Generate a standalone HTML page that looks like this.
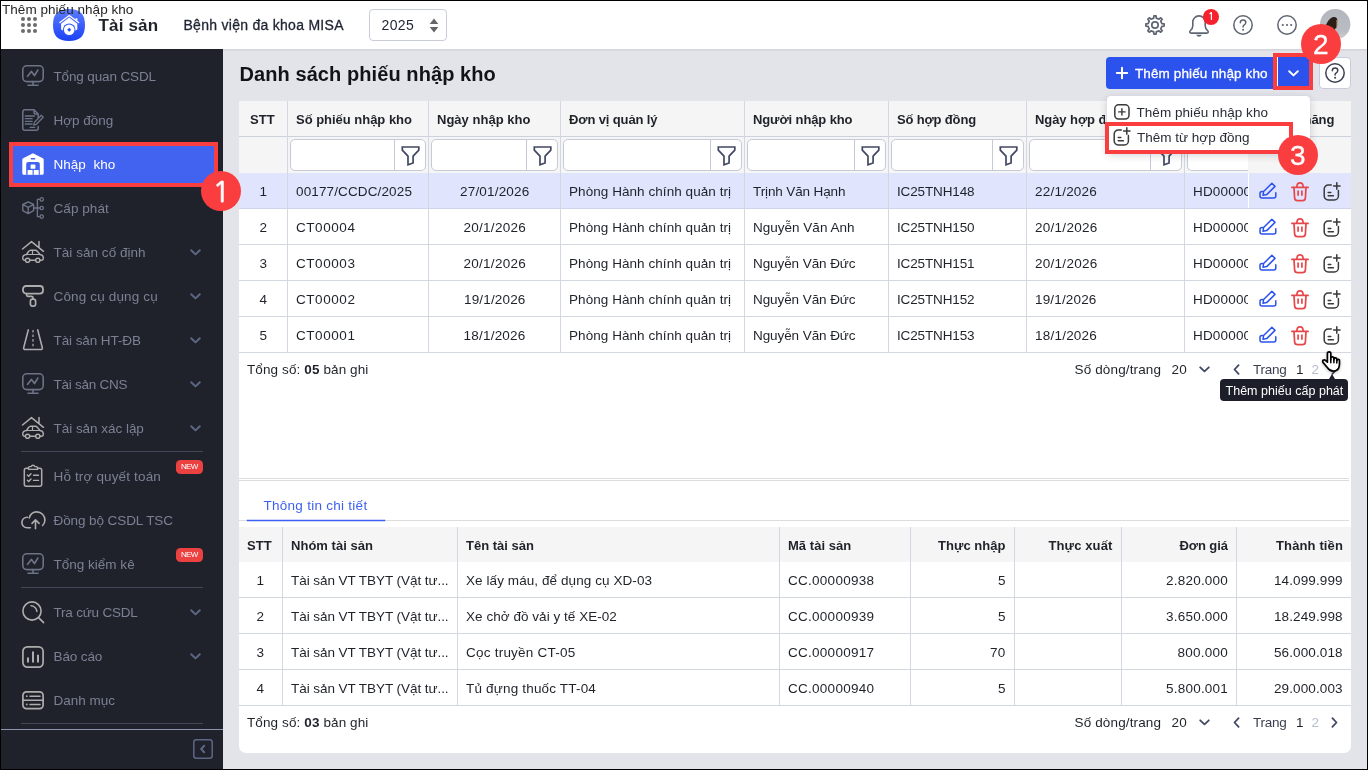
<!DOCTYPE html>
<html lang="vi"><head><meta charset="utf-8"><title>Danh sách phiếu nhập kho</title>
<style>
html,body{margin:0;padding:0}
body{width:1368px;height:770px;position:relative;overflow:hidden;background:#fff;font-family:"Liberation Sans",sans-serif;font-size:13px;color:#1f2229;will-change:transform}
.a{position:absolute;box-sizing:border-box}
.t{position:absolute;white-space:pre;line-height:20px;height:20px}
.m{-webkit-text-stroke:.3px currentColor}
svg{overflow:visible}
</style></head>
<body>
<div class="a" style="left:223px;top:49px;width:1144px;height:720px;background:#e3e4ea;"></div>
<div class="a" style="left:1px;top:49px;width:222px;height:720px;background:#1f222b;"></div>
<div class="a" style="left:1px;top:1px;width:1366px;height:48px;background:#fff;box-shadow:0 1px 2px rgba(40,45,70,.12);"></div>
<svg class="a" style="left:21px;top:17px;" width="16" height="16" viewBox="0 0 16 16" fill="none"><g fill="#6c6c6c"><circle cx="2" cy="2" r="2"/><circle cx="2" cy="8" r="2"/><circle cx="2" cy="14" r="2"/><circle cx="8" cy="2" r="2"/><circle cx="8" cy="8" r="2"/><circle cx="8" cy="14" r="2"/><circle cx="14" cy="2" r="2"/><circle cx="14" cy="8" r="2"/><circle cx="14" cy="14" r="2"/></g></svg>
<svg class="a" style="left:53px;top:9px;" width="32" height="32" viewBox="0 0 32 32" fill="none"><defs><linearGradient id="lg" x1="0" y1="0" x2="0" y2="1"><stop offset="0" stop-color="#5c7dff"/><stop offset="1" stop-color="#1c41f5"/></linearGradient></defs>
<path d="M16 0C27 0 32 5 32 16S27 32 16 32 0 27 0 16 5 0 16 0Z" fill="url(#lg)"/>
<path d="M6.900 13.600 16.200 6.500l9.400 7.100" stroke="#fff" stroke-width="1.300" stroke-linecap="round" stroke-linejoin="round"/>
<path d="M22.500 9.300h1.900v3.300l-1.900-1.500z" fill="#fff"/>
<path d="M8.100 14.700 16.200 8.500l8.100 6.200v5.700l-1.800 1.200H9.900l-1.800-1.200z" fill="#fff"/>
<circle cx="16.200" cy="20.700" r="6.300" fill="#3055f8"/>
<circle cx="16.200" cy="20.700" r="5.300" fill="#fff"/>
<path d="M16.200 18.700l2 2-2 2-2-2z" fill="#2a4ff6"/></svg>
<span class="t" style="left:98.5px;top:16.1px;font-size:17px;color:#1f2229;font-weight:700;letter-spacing:0.17px;">Tài sản</span>
<span class="t m" style="left:183.5px;top:15px;font-size:14px;color:#1f2433;letter-spacing:0.28px;">Bệnh viện đa khoa MISA</span>
<div class="a" style="left:369px;top:9px;width:78px;height:32px;background:#fff;border:1px solid #c9cdd9;border-radius:4px;"></div>
<span class="t" style="left:381.5px;top:15px;font-size:14px;color:#1f2433;letter-spacing:0.34px;">2025</span>
<svg class="a" style="left:429px;top:18px;" width="10" height="15" viewBox="0 0 10 15" fill="none"><path d="M5 .6 9.3 6H.7z M.7 9h8.6L5 14.4z" fill="#666"/></svg>
<svg class="a" style="left:1145px;top:15px;" width="20" height="20" viewBox="0 0 20 20" fill="none"><path d="M8.92 0.86 L11.08 0.86 L11.31 3.12 L13.93 4.21 L15.70 2.78 L17.22 4.30 L15.79 6.07 L16.88 8.69 L19.14 8.92 L19.14 11.08 L16.88 11.31 L15.79 13.93 L17.22 15.70 L15.70 17.22 L13.93 15.79 L11.31 16.88 L11.08 19.14 L8.92 19.14 L8.69 16.88 L6.07 15.79 L4.30 17.22 L2.78 15.70 L4.21 13.93 L3.12 11.31 L0.86 11.08 L0.86 8.92 L3.12 8.69 L4.21 6.07 L2.78 4.30 L4.30 2.78 L6.07 4.21 L8.69 3.12Z" stroke="#5f6572" stroke-width="1.700" stroke-linejoin="round"/>
<circle cx="10" cy="10" r="3.200" stroke="#5f6572" stroke-width="1.700"/></svg>
<svg class="a" style="left:1189px;top:14.5px;" width="20" height="22" viewBox="0 0 20 22" fill="none"><path d="M10 .900c-3.600 0-6.200 2.700-6.200 6.300v3.500c0 2-.700 3.400-2.300 4.800-1.300 1.200-.900 2.600.800 2.600h15.400c1.700 0 2.100-1.400.800-2.600-1.600-1.400-2.300-2.800-2.300-4.800V7.200c0-3.600-2.600-6.300-6.200-6.300z" stroke="#5f6572" stroke-width="1.600" stroke-linejoin="round"/>
<path d="M7.200 19.700h5.600c-.500 1.300-1.500 2-2.800 2s-2.300-.700-2.800-2z" fill="#5f6572"/></svg>
<div class="a" style="left:1203px;top:9px;width:16px;height:16px;background:#f5222d;border-radius:50%;"></div>
<span class="t" style="left:1208px;top:7px;font-size:10.5px;color:#fff;font-weight:700;font-family:NanumGothic,'Liberation Sans',sans-serif;">1</span>
<svg class="a" style="left:1233px;top:15px;" width="20" height="20" viewBox="0 0 20 20" fill="none"><circle cx="10" cy="10" r="9.200" stroke="#5f6572" stroke-width="1.500"/><path d="M7.300 7.800c0-1.600 1.200-2.700 2.800-2.700s2.700 1 2.700 2.500c0 1.200-.700 1.800-1.500 2.300-.800.500-1.200 1-1.200 1.900v.3" stroke="#5f6572" stroke-width="1.500" stroke-linecap="round"/><circle cx="10.100" cy="14.700" r="1" fill="#5f6572"/></svg>
<svg class="a" style="left:1277px;top:15px;" width="20" height="20" viewBox="0 0 20 20" fill="none"><circle cx="10" cy="10" r="9.2" stroke="#5f6572" stroke-width="1.5"/><g fill="#5f6572"><circle cx="5.8" cy="10" r="1.1"/><circle cx="10" cy="10" r="1.1"/><circle cx="14.2" cy="10" r="1.1"/></g></svg>
<svg class="a" style="left:1320px;top:9.2px;" width="30.4" height="30.4" viewBox="0 0 30.4 30.4" fill="none"><defs><clipPath id="av"><circle cx="15.2" cy="15.2" r="15.2"/></clipPath><linearGradient id="ag" x1="0" y1="0" x2="0" y2="1"><stop offset="0" stop-color="#b3b6bd"/><stop offset=".7" stop-color="#b9bcc2"/><stop offset="1" stop-color="#cdcfd1"/></linearGradient></defs>
<circle cx="15.2" cy="15.2" r="15.2" fill="url(#ag)"/>
<g clip-path="url(#av)"><path d="M4.500 21c1-5 3.800-11 7.600-12.600 2.600-1.100 4.900-.300 5.200 2.400.300 3 .200 5.800-.500 7.800l-1.500 1-1 4-9 1.500z" fill="#2a1e17"/>
<path d="M16.400 10.800c1.200.300 1.600 2.300 1.400 4.300-.200 1.900-.600 3.300-1.500 3.600.400-2.600.500-5.400.100-7.900z" fill="#d3ad92"/></g></svg>
<svg class="a" style="left:22px;top:65px;" width="22" height="22" viewBox="0 0 22 22" fill="none"><rect x=".8" y=".8" width="20.4" height="15.800" rx="4" stroke="#6d7386" stroke-width="1.6" stroke-linecap="round" stroke-linejoin="round"/><path d="M11 16.600v3.600M6 20.200h10" stroke="#6d7386" stroke-width="1.6" stroke-linecap="round" stroke-linejoin="round"/><path d="M5.600 11.300 9.400 6.500l3.100 4 3.300-5.400" stroke="#6d7386" stroke-width="1.7" stroke-linecap="round" stroke-linejoin="round"/></svg>
<span class="t" style="left:53.5px;top:67px;font-size:13.5px;color:#7b8094;letter-spacing:-0.14px;">Tổng quan CSDL</span>
<svg class="a" style="left:22px;top:109px;" width="22" height="22" viewBox="0 0 22 22" fill="none"><path d="M12 .8H2.800a2 2 0 0 0-2 2v16.400a2 2 0 0 0 2 2h11.400a2 2 0 0 0 2-2V17.500M12 .8l4.200 4.200V8.500M12 .8v2.700a1.500 1.500 0 0 0 1.500 1.500h2.700" stroke="#6d7386" stroke-width="1.5" stroke-linecap="round" stroke-linejoin="round"/><path d="M3.300 7h9.200M3.300 9.700h6.800M3.300 12.300h6.800M3.300 15h6.800M8.200 18.400h4.500" stroke="#6d7386" stroke-width="1.3" stroke-linecap="round" stroke-linejoin="round"/><path d="M19.300 6.300l1.900 1.900-6.900 7.100-2.600.8.700-2.700z" stroke="#6d7386" stroke-width="1.3" stroke-linecap="round" stroke-linejoin="round"/></svg>
<span class="t" style="left:53.5px;top:111px;font-size:13.5px;color:#7b8094;letter-spacing:-0.03px;">Hợp đồng</span>
<div class="a" style="left:9px;top:142px;width:209px;height:45px;background:#4262f0;border:4px solid #fa3e40;"></div>
<svg class="a" style="left:22px;top:153px;" width="22" height="22" viewBox="0 0 22 22" fill="none"><path d="M11 .3 20.800 5.300a1.500 1.500 0 0 1 .9 1.400V20.300a1.500 1.500 0 0 1-1.500 1.500H1.800A1.500 1.500 0 0 1 .3 20.300V6.700a1.500 1.500 0 0 1 .9-1.400z" fill="#fff"/><path d="M4.200 21.800V11a2 2 0 0 1 2-2h9.600a2 2 0 0 1 2 2v10.800z" fill="#4262f0"/><rect x="8.600" y="5" width="4.800" height="1.600" rx=".8" fill="#4262f0"/><rect x="8.600" y="11.500" width="4.800" height="4.300" rx=".5" fill="#fff"/><rect x="5.600" y="17" width="5" height="4.800" rx=".5" fill="#fff"/><rect x="11.700" y="17" width="5" height="4.800" rx=".5" fill="#fff"/></svg>
<span class="t" style="left:53.5px;top:155px;font-size:13.5px;color:#fff;letter-spacing:0.03px;">Nhập  kho</span>
<svg class="a" style="left:22px;top:197px;" width="22" height="22" viewBox="0 0 22 22" fill="none"><path d="M6.200 4.800l5.400 2.700v6.200l-5.400 2.900-5.400-2.900V7.500z M.8 7.500l5.400 2.900 5.400-2.900M6.200 10.400v6.200" stroke="#6d7386" stroke-width="1.4" stroke-linecap="round" stroke-linejoin="round"/><path d="M11.800 11h3.600M15.400 2.400v17.200M15.400 2.400h2.400M15.400 11h2.400M15.400 19.600h2.400" stroke="#6d7386" stroke-width="1.4" stroke-linecap="round" stroke-linejoin="round"/><circle cx="19.700" cy="2.400" r="1.700" stroke="#6d7386" stroke-width="1.3" stroke-linecap="round" stroke-linejoin="round"/><circle cx="19.700" cy="11" r="1.700" stroke="#6d7386" stroke-width="1.3" stroke-linecap="round" stroke-linejoin="round"/><circle cx="19.700" cy="19.600" r="1.700" stroke="#6d7386" stroke-width="1.3" stroke-linecap="round" stroke-linejoin="round"/></svg>
<span class="t" style="left:53.5px;top:199px;font-size:13.5px;color:#7b8094;letter-spacing:0.06px;">Cấp phát</span>
<svg class="a" style="left:22px;top:241px;" width="22" height="22" viewBox="0 0 22 22" fill="none"><path d="M.5 8 9.500 .6l12 9.700M17 .6v6" stroke="#adadad" stroke-width="1.5" stroke-linecap="round" stroke-linejoin="round"/><path d="M3.400 19.300H2.600a1.800 1.800 0 0 1-1.800-1.800v-.8c0-2 1.500-3 3.700-3.200l2-3c.500-.800 1.300-1.200 2.200-1.200H13c1 0 1.900.400 2.500 1.200l2.500 3c2 .300 3.300 1.200 3.300 3.200v.8a1.800 1.800 0 0 1-1.800 1.800H18M7.800 19.300h5.800" stroke="#adadad" stroke-width="1.4" stroke-linecap="round" stroke-linejoin="round"/><path d="M4.500 13.500H18M10.500 9.300v4.200" stroke="#adadad" stroke-width="1.2" stroke-linecap="round" stroke-linejoin="round"/><circle cx="5.600" cy="19.300" r="2.100" stroke="#adadad" stroke-width="1.4" stroke-linecap="round" stroke-linejoin="round"/><circle cx="15.800" cy="19.300" r="2.100" stroke="#adadad" stroke-width="1.4" stroke-linecap="round" stroke-linejoin="round"/></svg>
<span class="t" style="left:53.5px;top:243px;font-size:13.5px;color:#7b8094;letter-spacing:0.04px;">Tài sản cố định</span>
<svg class="a" style="left:190px;top:248.5px;" width="11" height="7" viewBox="0 0 11 7" fill="none"><path d="M1.200 1.300 5.500 5.400 9.800 1.300" stroke="#5d6685" stroke-width="2" stroke-linecap="round" stroke-linejoin="round"/></svg>
<svg class="a" style="left:22px;top:285px;" width="22" height="22" viewBox="0 0 22 22" fill="none"><rect x="1" y="1" width="20" height="7.600" rx="3" stroke="#adadad" stroke-width="1.8" stroke-linecap="round" stroke-linejoin="round"/><path d="M4.600 8.600v1.200a1.500 1.500 0 0 0 1.500 1.500H9.500a1.500 1.500 0 0 1 1.500 1.500v1.400" stroke="#adadad" stroke-width="1.7" stroke-linecap="round" stroke-linejoin="round"/><rect x="8.400" y="14.200" width="5.200" height="7" rx="2.200" stroke="#adadad" stroke-width="1.7" stroke-linecap="round" stroke-linejoin="round"/></svg>
<span class="t" style="left:53.5px;top:287px;font-size:13.5px;color:#7b8094;letter-spacing:0.15px;">Công cụ dụng cụ</span>
<svg class="a" style="left:190px;top:292.5px;" width="11" height="7" viewBox="0 0 11 7" fill="none"><path d="M1.200 1.300 5.500 5.400 9.800 1.300" stroke="#5d6685" stroke-width="2" stroke-linecap="round" stroke-linejoin="round"/></svg>
<svg class="a" style="left:22px;top:329px;" width="22" height="22" viewBox="0 0 22 22" fill="none"><path d="M6.300 .9 1.700 18.600a1.500 1.500 0 0 0 1.500 1.900H18.800a1.500 1.500 0 0 0 1.500-1.900L15.700 .9" stroke="#adadad" stroke-width="1.6" stroke-linecap="round" stroke-linejoin="round"/><path d="M11 .9v17.500" stroke="#adadad" stroke-width="1.200" stroke-dasharray="2.600 2"/></svg>
<span class="t" style="left:53.5px;top:331px;font-size:13.5px;color:#7b8094;letter-spacing:-0.09px;">Tài sản HT-ĐB</span>
<svg class="a" style="left:190px;top:336.5px;" width="11" height="7" viewBox="0 0 11 7" fill="none"><path d="M1.200 1.300 5.500 5.400 9.800 1.300" stroke="#5d6685" stroke-width="2" stroke-linecap="round" stroke-linejoin="round"/></svg>
<svg class="a" style="left:22px;top:373px;" width="22" height="22" viewBox="0 0 22 22" fill="none"><rect x=".8" y=".8" width="20.4" height="15.800" rx="4" stroke="#6d7386" stroke-width="1.6" stroke-linecap="round" stroke-linejoin="round"/><path d="M11 16.600v3.600M6 20.200h10" stroke="#6d7386" stroke-width="1.6" stroke-linecap="round" stroke-linejoin="round"/><path d="M5.600 11.300 9.400 6.500l3.100 4 3.300-5.400" stroke="#6d7386" stroke-width="1.7" stroke-linecap="round" stroke-linejoin="round"/></svg>
<span class="t" style="left:53.5px;top:375px;font-size:13.5px;color:#7b8094;letter-spacing:-0.26px;">Tài sản CNS</span>
<svg class="a" style="left:190px;top:380.5px;" width="11" height="7" viewBox="0 0 11 7" fill="none"><path d="M1.200 1.300 5.500 5.400 9.800 1.300" stroke="#5d6685" stroke-width="2" stroke-linecap="round" stroke-linejoin="round"/></svg>
<svg class="a" style="left:22px;top:417px;" width="22" height="22" viewBox="0 0 22 22" fill="none"><path d="M.5 8 9.500 .6l12 9.700M17 .6v6" stroke="#adadad" stroke-width="1.5" stroke-linecap="round" stroke-linejoin="round"/><path d="M3.400 19.300H2.600a1.800 1.800 0 0 1-1.800-1.800v-.8c0-2 1.500-3 3.700-3.200l2-3c.500-.800 1.300-1.200 2.200-1.200H13c1 0 1.900.400 2.500 1.200l2.500 3c2 .300 3.300 1.200 3.300 3.200v.8a1.800 1.800 0 0 1-1.800 1.800H18M7.800 19.300h5.800" stroke="#adadad" stroke-width="1.4" stroke-linecap="round" stroke-linejoin="round"/><path d="M4.500 13.500H18M10.500 9.300v4.200" stroke="#adadad" stroke-width="1.2" stroke-linecap="round" stroke-linejoin="round"/><circle cx="5.600" cy="19.300" r="2.100" stroke="#adadad" stroke-width="1.4" stroke-linecap="round" stroke-linejoin="round"/><circle cx="15.800" cy="19.300" r="2.100" stroke="#adadad" stroke-width="1.4" stroke-linecap="round" stroke-linejoin="round"/></svg>
<span class="t" style="left:53.5px;top:419px;font-size:13.5px;color:#7b8094;letter-spacing:-0.03px;">Tài sản xác lập</span>
<svg class="a" style="left:190px;top:424.5px;" width="11" height="7" viewBox="0 0 11 7" fill="none"><path d="M1.200 1.300 5.500 5.400 9.800 1.300" stroke="#5d6685" stroke-width="2" stroke-linecap="round" stroke-linejoin="round"/></svg>
<svg class="a" style="left:22px;top:464px;" width="22" height="22" viewBox="0 0 22 22" fill="none"><path d="M6.500 4.200H4.300a2 2 0 0 0-2 2v14a2 2 0 0 0 2 2H17.700a2 2 0 0 0 2-2v-14a2 2 0 0 0-2-2H15.500" stroke="#adadad" stroke-width="1.5" stroke-linecap="round" stroke-linejoin="round"/><path d="M6.500 5.400V3.600a1 1 0 0 1 1-1h1.700a1.900 1.900 0 0 1 3.600 0h1.700a1 1 0 0 1 1 1v1.800z" stroke="#adadad" stroke-width="1.4" stroke-linecap="round" stroke-linejoin="round"/><path d="M5.400 11l1.300 1.300 2.300-2.500M5.400 16.200l1.300 1.300 2.300-2.500M11.500 11.200h5M11.500 16.400h5" stroke="#adadad" stroke-width="1.4" stroke-linecap="round" stroke-linejoin="round"/></svg>
<span class="t" style="left:53.5px;top:467px;font-size:13.5px;color:#7b8094;letter-spacing:0.15px;">Hỗ trợ quyết toán</span>
<div class="a" style="left:176px;top:460px;width:27px;height:14px;background:#ec4141;border-radius:4.500px;"></div>
<span class="t" style="left:181px;top:457.2px;font-size:8px;color:#fff;letter-spacing:-0.70px;">NEW</span>
<svg class="a" style="left:21px;top:510.5px;" width="24" height="19" viewBox="0 0 24 19" fill="none"><path d="M9.400 16.700H6.200C3 16.700.900 14.400.900 11.600c0-3 2.300-5.300 5.500-5.400" stroke="#adadad" stroke-width="1.6" stroke-linecap="round" stroke-linejoin="round"/><path d="M8.300 6.900C9.300 3.400 12 .900 15.700.900c4.700 0 8.200 3.600 8.200 8.200 0 2.200-.800 4.100-2.300 5.400" stroke="#adadad" stroke-width="1.6" stroke-linecap="round" stroke-linejoin="round"/><path d="M14.500 17.800V9.100M11 12.400l3.500-3.500 3.600 3.500" stroke="#adadad" stroke-width="1.6" stroke-linecap="round" stroke-linejoin="round"/></svg>
<span class="t" style="left:53.5px;top:511px;font-size:13.5px;color:#7b8094;letter-spacing:-0.09px;">Đồng bộ CSDL TSC</span>
<svg class="a" style="left:22px;top:553px;" width="22" height="22" viewBox="0 0 22 22" fill="none"><rect x=".8" y=".8" width="20.4" height="15.800" rx="4" stroke="#6d7386" stroke-width="1.6" stroke-linecap="round" stroke-linejoin="round"/><path d="M11 16.600v3.600M6 20.200h10" stroke="#6d7386" stroke-width="1.6" stroke-linecap="round" stroke-linejoin="round"/><path d="M5.600 11.300 9.400 6.500l3.100 4 3.300-5.400" stroke="#6d7386" stroke-width="1.7" stroke-linecap="round" stroke-linejoin="round"/></svg>
<span class="t" style="left:53.5px;top:555px;font-size:13.5px;color:#7b8094;letter-spacing:0.01px;">Tổng kiểm kê</span>
<div class="a" style="left:176px;top:548px;width:27px;height:14px;background:#ec4141;border-radius:4.500px;"></div>
<span class="t" style="left:181px;top:545.2px;font-size:8px;color:#fff;letter-spacing:-0.70px;">NEW</span>
<svg class="a" style="left:22px;top:601px;" width="22" height="22" viewBox="0 0 22 22" fill="none"><circle cx="10" cy="10" r="9.100" stroke="#adadad" stroke-width="1.6" stroke-linecap="round" stroke-linejoin="round"/><path d="M16.600 16.600l5 5" stroke="#adadad" stroke-width="1.6" stroke-linecap="round" stroke-linejoin="round"/><path d="M9 4.800c3 0 5.700 2.500 5.900 5.600" stroke="#adadad" stroke-width="1.5" stroke-linecap="round" stroke-linejoin="round"/></svg>
<span class="t" style="left:53.5px;top:603px;font-size:13.5px;color:#7b8094;letter-spacing:-0.20px;">Tra cứu CSDL</span>
<svg class="a" style="left:190px;top:608.5px;" width="11" height="7" viewBox="0 0 11 7" fill="none"><path d="M1.200 1.300 5.500 5.400 9.800 1.300" stroke="#5d6685" stroke-width="2" stroke-linecap="round" stroke-linejoin="round"/></svg>
<svg class="a" style="left:22px;top:645.5px;" width="22" height="22" viewBox="0 0 22 22" fill="none"><rect x=".9" y=".9" width="20.200" height="20.200" rx="4.500" stroke="#adadad" stroke-width="1.7" stroke-linecap="round" stroke-linejoin="round"/><path d="M6 11.500v5M11 5.500v11M16 8.700v7.800" stroke="#adadad" stroke-width="2"/></svg>
<span class="t" style="left:53.5px;top:647px;font-size:13.5px;color:#7b8094;letter-spacing:-0.11px;">Báo cáo</span>
<svg class="a" style="left:190px;top:652.5px;" width="11" height="7" viewBox="0 0 11 7" fill="none"><path d="M1.200 1.300 5.500 5.400 9.800 1.300" stroke="#5d6685" stroke-width="2" stroke-linecap="round" stroke-linejoin="round"/></svg>
<svg class="a" style="left:22px;top:691px;" width="22" height="22" viewBox="0 0 22 22" fill="none"><rect x=".9" y=".9" width="20.200" height="16.700" rx="3.500" stroke="#adadad" stroke-width="1.7" stroke-linecap="round" stroke-linejoin="round"/><path d="M.9 9.300h20.200" stroke="#adadad" stroke-width="1.6" stroke-linecap="round" stroke-linejoin="round"/><path d="M8 5.200h10M8 13.400h10" stroke="#adadad" stroke-width="1.5" stroke-linecap="round" stroke-linejoin="round"/><circle cx="4.800" cy="5.200" r=".9" fill="#adadad"/><circle cx="4.800" cy="13.400" r=".9" fill="#adadad"/></svg>
<span class="t" style="left:53.5px;top:691px;font-size:13.5px;color:#7b8094;letter-spacing:-0.02px;">Danh mục</span>
<div class="a" style="left:21px;top:451px;width:182px;height:1px;background:#434859;"></div>
<div class="a" style="left:21px;top:587px;width:182px;height:1px;background:#434859;"></div>
<div class="a" style="left:21px;top:723px;width:182px;height:1px;background:#434859;"></div>
<div class="a" style="left:1px;top:729px;width:222px;height:1px;background:#8b93ad;"></div>
<svg class="a" style="left:193px;top:739px;" width="20" height="20" viewBox="0 0 20 20" fill="none"><rect x=".8" y=".8" width="18.400" height="18.400" rx="2.500" stroke="#5d6685" stroke-width="1.500"/><path d="M11.200 6.800 8.200 10l3 3.200" stroke="#5d6685" stroke-width="2" stroke-linecap="round" stroke-linejoin="round"/></svg>
<span class="t" style="left:239.5px;top:63.5px;font-size:20px;color:#111318;font-weight:700;letter-spacing:0.08px;">Danh sách phiếu nhập kho</span>
<div class="a" style="left:1106px;top:57px;width:204px;height:32px;background:#2c52ed;border-radius:4px;"></div>
<svg class="a" style="left:1116px;top:67px;" width="12" height="12" viewBox="0 0 12 12" fill="none"><path d="M6 .8v10.400M.8 6h10.400" stroke="#fff" stroke-width="2" stroke-linecap="round"/></svg>
<span class="t m" style="left:1135px;top:63.7px;font-size:13.5px;color:#fff;letter-spacing:0.11px;">Thêm phiếu nhập kho</span>
<div class="a" style="left:1277px;top:57px;width:1px;height:32px;background:#fff;"></div>
<svg class="a" style="left:1287.5px;top:70px;" width="11" height="7" viewBox="0 0 11 7" fill="none"><path d="M1.200 1.300 5.500 5.400 9.800 1.300" stroke="#fff" stroke-width="2" stroke-linecap="round" stroke-linejoin="round"/></svg>
<div class="a" style="left:1319px;top:57px;width:32px;height:32px;background:#fff;border:1px solid #c9cdd9;border-radius:4px;"></div>
<svg class="a" style="left:1325px;top:63px;" width="20" height="20" viewBox="0 0 20 20" fill="none"><circle cx="10" cy="10" r="9.200" stroke="#3b4152" stroke-width="1.500"/><path d="M7.300 7.800c0-1.600 1.200-2.700 2.800-2.700s2.700 1 2.700 2.500c0 1.200-.700 1.800-1.500 2.300-.800.500-1.200 1-1.200 1.900v.3" stroke="#3b4152" stroke-width="1.500" stroke-linecap="round"/><circle cx="10.100" cy="14.700" r="1" fill="#3b4152"/></svg>
<div class="a" style="left:239px;top:101px;width:1112px;height:652px;background:#fff;border-radius:2px 2px 7px 7px;"></div>
<div class="a" style="left:239px;top:101px;width:1112px;height:72px;background:#f5f5f5;border-radius:2px 2px 0 0;"></div>
<div class="a" style="left:239px;top:173px;width:1112px;height:36px;background:#e0e4fd;"></div>
<div class="a" style="left:239px;top:136px;width:1112px;height:1px;background:#cdd2de;"></div>
<div class="a" style="left:239px;top:208px;width:1112px;height:1px;background:#cfd4ea;"></div>
<div class="a" style="left:239px;top:244px;width:1112px;height:1px;background:#d3d7e2;"></div>
<div class="a" style="left:239px;top:280px;width:1112px;height:1px;background:#d3d7e2;"></div>
<div class="a" style="left:239px;top:316px;width:1112px;height:1px;background:#d3d7e2;"></div>
<div class="a" style="left:239px;top:352px;width:1112px;height:1px;background:#d3d7e2;"></div>
<div class="a" style="left:287px;top:101px;width:1px;height:252px;background:#d3d7e2;"></div>
<div class="a" style="left:428px;top:101px;width:1px;height:252px;background:#d3d7e2;"></div>
<div class="a" style="left:560px;top:101px;width:1px;height:252px;background:#d3d7e2;"></div>
<div class="a" style="left:744px;top:101px;width:1px;height:252px;background:#d3d7e2;"></div>
<div class="a" style="left:888px;top:101px;width:1px;height:252px;background:#d3d7e2;"></div>
<div class="a" style="left:1026px;top:101px;width:1px;height:252px;background:#d3d7e2;"></div>
<div class="a" style="left:1184px;top:101px;width:1px;height:252px;background:#d3d7e2;"></div>
<span class="t" style="left:250px;top:109.8px;font-size:13px;color:#1f2229;font-weight:700;letter-spacing:0.08px;">STT</span>
<span class="t" style="left:296px;top:109.8px;font-size:13px;color:#1f2229;font-weight:700;letter-spacing:-0.02px;">Số phiếu nhập kho</span>
<span class="t" style="left:437px;top:109.8px;font-size:13px;color:#1f2229;font-weight:700;letter-spacing:0.02px;">Ngày nhập kho</span>
<span class="t" style="left:569px;top:109.8px;font-size:13px;color:#1f2229;font-weight:700;letter-spacing:-0.12px;">Đơn vị quản lý</span>
<span class="t" style="left:753px;top:109.8px;font-size:13px;color:#1f2229;font-weight:700;letter-spacing:-0.11px;">Người nhập kho</span>
<span class="t" style="left:897px;top:109.8px;font-size:13px;color:#1f2229;font-weight:700;letter-spacing:-0.16px;">Số hợp đồng</span>
<span class="t" style="left:1035px;top:109.8px;font-size:13px;color:#1f2229;font-weight:700;letter-spacing:-0.07px;width:70px;overflow:hidden;">Ngày hợp đồng</span>
<span class="t" style="left:1193px;top:109.8px;font-size:13px;color:#1f2229;font-weight:700;letter-spacing:-0.20px;">Mã hợp đồng</span>
<div class="a" style="left:290px;top:139px;width:136px;height:32px;background:#fff;border:1px solid #c6cad7;border-radius:5px;"></div>
<div class="a" style="left:394px;top:140px;width:1px;height:30px;background:#c6cad7;"></div>
<svg class="a" style="left:400.5px;top:146px;" width="19" height="19.5" viewBox="0 0 19 19.5" fill="none"><path d="M1 1h16.500v3.200l-5.700 6V17l-5.100 1.700V10.200L1 4.200z" stroke="#414862" stroke-width="1.700" stroke-linejoin="miter" transform="translate(.3 0)"/></svg>
<div class="a" style="left:431px;top:139px;width:127px;height:32px;background:#fff;border:1px solid #c6cad7;border-radius:5px;"></div>
<div class="a" style="left:526px;top:140px;width:1px;height:30px;background:#c6cad7;"></div>
<svg class="a" style="left:532.5px;top:146px;" width="19" height="19.5" viewBox="0 0 19 19.5" fill="none"><path d="M1 1h16.500v3.200l-5.700 6V17l-5.100 1.700V10.200L1 4.200z" stroke="#414862" stroke-width="1.700" stroke-linejoin="miter" transform="translate(.3 0)"/></svg>
<div class="a" style="left:563px;top:139px;width:179px;height:32px;background:#fff;border:1px solid #c6cad7;border-radius:5px;"></div>
<div class="a" style="left:710px;top:140px;width:1px;height:30px;background:#c6cad7;"></div>
<svg class="a" style="left:716.5px;top:146px;" width="19" height="19.5" viewBox="0 0 19 19.5" fill="none"><path d="M1 1h16.500v3.200l-5.700 6V17l-5.100 1.700V10.200L1 4.200z" stroke="#414862" stroke-width="1.700" stroke-linejoin="miter" transform="translate(.3 0)"/></svg>
<div class="a" style="left:747px;top:139px;width:139px;height:32px;background:#fff;border:1px solid #c6cad7;border-radius:5px;"></div>
<div class="a" style="left:854px;top:140px;width:1px;height:30px;background:#c6cad7;"></div>
<svg class="a" style="left:860.5px;top:146px;" width="19" height="19.5" viewBox="0 0 19 19.5" fill="none"><path d="M1 1h16.500v3.200l-5.700 6V17l-5.100 1.700V10.200L1 4.200z" stroke="#414862" stroke-width="1.700" stroke-linejoin="miter" transform="translate(.3 0)"/></svg>
<div class="a" style="left:891px;top:139px;width:133px;height:32px;background:#fff;border:1px solid #c6cad7;border-radius:5px;"></div>
<div class="a" style="left:992px;top:140px;width:1px;height:30px;background:#c6cad7;"></div>
<svg class="a" style="left:998.5px;top:146px;" width="19" height="19.5" viewBox="0 0 19 19.5" fill="none"><path d="M1 1h16.500v3.200l-5.700 6V17l-5.100 1.700V10.200L1 4.200z" stroke="#414862" stroke-width="1.700" stroke-linejoin="miter" transform="translate(.3 0)"/></svg>
<div class="a" style="left:1029px;top:139px;width:153px;height:32px;background:#fff;border:1px solid #c6cad7;border-radius:5px;"></div>
<div class="a" style="left:1150px;top:140px;width:1px;height:30px;background:#c6cad7;"></div>
<svg class="a" style="left:1156.5px;top:146px;" width="19" height="19.5" viewBox="0 0 19 19.5" fill="none"><path d="M1 1h16.500v3.200l-5.700 6V17l-5.100 1.700V10.200L1 4.200z" stroke="#414862" stroke-width="1.700" stroke-linejoin="miter" transform="translate(.3 0)"/></svg>
<div class="a" style="left:1187px;top:139px;width:75px;height:32px;background:#fff;border:1px solid #c6cad7;border-radius:5px;border-right:none;border-radius:5px 0 0 5px;"></div>
<span class="t" style="left:259.5px;top:181.6px;font-size:13.5px;color:#1f2229;">1</span>
<span class="t" style="left:296px;top:181.6px;font-size:13.5px;color:#1f2229;letter-spacing:0.13px;">00177/CCDC/2025</span>
<span class="t" style="left:460px;top:181.6px;font-size:13.5px;color:#1f2229;letter-spacing:0.19px;">27/01/2026</span>
<span class="t" style="left:569px;top:181.6px;font-size:13.5px;color:#1f2229;letter-spacing:0.06px;">Phòng Hành chính quản trị</span>
<span class="t" style="left:753px;top:181.6px;font-size:13.5px;color:#1f2229;letter-spacing:-0.12px;">Trịnh Văn Hạnh</span>
<span class="t" style="left:897px;top:181.6px;font-size:13.5px;color:#1f2229;letter-spacing:-0.13px;">IC25TNH148</span>
<span class="t" style="left:1035px;top:181.6px;font-size:13.5px;color:#1f2229;letter-spacing:0.22px;">22/1/2026</span>
<span class="t" style="left:1193px;top:181.6px;font-size:13.5px;color:#1f2229;letter-spacing:0.18px;">HD000008</span>
<span class="t" style="left:259.5px;top:217.6px;font-size:13.5px;color:#1f2229;">2</span>
<span class="t" style="left:296px;top:217.6px;font-size:13.5px;color:#1f2229;letter-spacing:0.56px;">CT00004</span>
<span class="t" style="left:463.5px;top:217.6px;font-size:13.5px;color:#1f2229;letter-spacing:0.27px;">20/1/2026</span>
<span class="t" style="left:569px;top:217.6px;font-size:13.5px;color:#1f2229;letter-spacing:0.06px;">Phòng Hành chính quản trị</span>
<span class="t" style="left:753px;top:217.6px;font-size:13.5px;color:#1f2229;letter-spacing:0.01px;">Nguyễn Văn Anh</span>
<span class="t" style="left:897px;top:217.6px;font-size:13.5px;color:#1f2229;letter-spacing:-0.13px;">IC25TNH150</span>
<span class="t" style="left:1035px;top:217.6px;font-size:13.5px;color:#1f2229;letter-spacing:0.27px;">20/1/2026</span>
<span class="t" style="left:1193px;top:217.6px;font-size:13.5px;color:#1f2229;letter-spacing:0.18px;">HD000007</span>
<span class="t" style="left:259.5px;top:253.6px;font-size:13.5px;color:#1f2229;">3</span>
<span class="t" style="left:296px;top:253.6px;font-size:13.5px;color:#1f2229;letter-spacing:0.56px;">CT00003</span>
<span class="t" style="left:463.5px;top:253.6px;font-size:13.5px;color:#1f2229;letter-spacing:0.27px;">20/1/2026</span>
<span class="t" style="left:569px;top:253.6px;font-size:13.5px;color:#1f2229;letter-spacing:0.06px;">Phòng Hành chính quản trị</span>
<span class="t" style="left:753px;top:253.6px;font-size:13.5px;color:#1f2229;letter-spacing:-0.08px;">Nguyễn Văn Đức</span>
<span class="t" style="left:897px;top:253.6px;font-size:13.5px;color:#1f2229;letter-spacing:-0.13px;">IC25TNH151</span>
<span class="t" style="left:1035px;top:253.6px;font-size:13.5px;color:#1f2229;letter-spacing:0.27px;">20/1/2026</span>
<span class="t" style="left:1193px;top:253.6px;font-size:13.5px;color:#1f2229;letter-spacing:0.18px;">HD000006</span>
<span class="t" style="left:259.5px;top:289.6px;font-size:13.5px;color:#1f2229;">4</span>
<span class="t" style="left:296px;top:289.6px;font-size:13.5px;color:#1f2229;letter-spacing:0.56px;">CT00002</span>
<span class="t" style="left:464px;top:289.6px;font-size:13.5px;color:#1f2229;letter-spacing:0.16px;">19/1/2026</span>
<span class="t" style="left:569px;top:289.6px;font-size:13.5px;color:#1f2229;letter-spacing:0.06px;">Phòng Hành chính quản trị</span>
<span class="t" style="left:753px;top:289.6px;font-size:13.5px;color:#1f2229;letter-spacing:-0.08px;">Nguyễn Văn Đức</span>
<span class="t" style="left:897px;top:289.6px;font-size:13.5px;color:#1f2229;letter-spacing:-0.13px;">IC25TNH152</span>
<span class="t" style="left:1035px;top:289.6px;font-size:13.5px;color:#1f2229;letter-spacing:0.16px;">19/1/2026</span>
<span class="t" style="left:1193px;top:289.6px;font-size:13.5px;color:#1f2229;letter-spacing:0.18px;">HD000005</span>
<span class="t" style="left:259.5px;top:325.6px;font-size:13.5px;color:#1f2229;">5</span>
<span class="t" style="left:296px;top:325.6px;font-size:13.5px;color:#1f2229;letter-spacing:0.56px;">CT00001</span>
<span class="t" style="left:463.5px;top:325.6px;font-size:13.5px;color:#1f2229;letter-spacing:0.22px;">18/1/2026</span>
<span class="t" style="left:569px;top:325.6px;font-size:13.5px;color:#1f2229;letter-spacing:0.06px;">Phòng Hành chính quản trị</span>
<span class="t" style="left:753px;top:325.6px;font-size:13.5px;color:#1f2229;letter-spacing:-0.08px;">Nguyễn Văn Đức</span>
<span class="t" style="left:897px;top:325.6px;font-size:13.5px;color:#1f2229;letter-spacing:-0.13px;">IC25TNH153</span>
<span class="t" style="left:1035px;top:325.6px;font-size:13.5px;color:#1f2229;letter-spacing:0.22px;">18/1/2026</span>
<span class="t" style="left:1193px;top:325.6px;font-size:13.5px;color:#1f2229;letter-spacing:0.18px;">HD000004</span>
<div class="a" style="left:1248px;top:101px;width:103px;height:72px;background:#f5f5f5;border-radius:0 2px 0 0;"></div>
<div class="a" style="left:1248px;top:136px;width:103px;height:1px;background:#cdd2de;"></div>
<div class="a" style="left:1248px;top:173px;width:103px;height:35px;background:#e0e4fd;border-left:1px solid #fff;"></div>
<div class="a" style="left:1248px;top:209px;width:103px;height:35px;background:#fff;"></div>
<div class="a" style="left:1248px;top:245px;width:103px;height:35px;background:#fff;"></div>
<div class="a" style="left:1248px;top:281px;width:103px;height:35px;background:#fff;"></div>
<div class="a" style="left:1248px;top:317px;width:103px;height:35px;background:#fff;"></div>
<span class="t" style="left:1266px;top:109.8px;font-size:13px;color:#1f2229;font-weight:700;letter-spacing:-0.02px;">Chức năng</span>
<svg class="a" style="left:1258.5px;top:181.5px;" width="18" height="18" viewBox="0 0 18 18" fill="none"><path d="M12.900 1.300 16 4.400 7.700 12.600l-3.700 .7.600-3.800z" stroke="#2c52ed" stroke-width="1.500" stroke-linejoin="round"/><path d="M3.600 9.600H3a2 2 0 0 0-2 2v2.400a2 2 0 0 0 2 2H14.800a2 2 0 0 0 2-2v-3.200" stroke="#2c52ed" stroke-width="1.500" stroke-linecap="round"/></svg>
<svg class="a" style="left:1290.9px;top:182px;" width="18" height="19.5" viewBox="0 0 18 19.5" fill="none"><path d="M.900 5.400H17.100M5.800 5.200c0-2.600 1.100-4.300 3.200-4.300s3.200 1.700 3.200 4.300" stroke="#e8474a" stroke-width="1.700" stroke-linecap="round"/><path d="M3 5.600l.600 10.300A3 3 0 0 0 6.600 18.700h4.800a3 3 0 0 0 3-2.800L15 5.600" stroke="#e8474a" stroke-width="1.700" stroke-linecap="round" stroke-linejoin="round"/><path d="M7.100 8.400v5.400M10.900 8.400v5.400" stroke="#e8474a" stroke-width="1.700"/></svg>
<svg class="a" style="left:1322.5px;top:181.5px;" width="18" height="19" viewBox="0 0 18 19" fill="none"><path d="M8.300 3.100H5.200A4 4 0 0 0 1.200 7.100v6.900a4 4 0 0 0 4 4h6.200a4 4 0 0 0 4-4V8.500" stroke="#3a3a3a" stroke-width="1.5" stroke-linecap="round"/><path d="M13.800 .8v6.400M10.600 4h6.400" stroke="#3a3a3a" stroke-width="1.5" stroke-linecap="round"/><path d="M5.200 10.400h2.600M5.200 13.700h5.200" stroke="#3a3a3a" stroke-width="1.5" stroke-linecap="round"/></svg>
<svg class="a" style="left:1258.5px;top:217.5px;" width="18" height="18" viewBox="0 0 18 18" fill="none"><path d="M12.900 1.300 16 4.400 7.700 12.600l-3.700 .7.600-3.800z" stroke="#2c52ed" stroke-width="1.500" stroke-linejoin="round"/><path d="M3.600 9.600H3a2 2 0 0 0-2 2v2.400a2 2 0 0 0 2 2H14.800a2 2 0 0 0 2-2v-3.200" stroke="#2c52ed" stroke-width="1.500" stroke-linecap="round"/></svg>
<svg class="a" style="left:1290.9px;top:218px;" width="18" height="19.5" viewBox="0 0 18 19.5" fill="none"><path d="M.900 5.400H17.100M5.800 5.200c0-2.600 1.100-4.300 3.200-4.300s3.200 1.700 3.200 4.300" stroke="#e8474a" stroke-width="1.700" stroke-linecap="round"/><path d="M3 5.600l.600 10.300A3 3 0 0 0 6.600 18.700h4.800a3 3 0 0 0 3-2.800L15 5.600" stroke="#e8474a" stroke-width="1.700" stroke-linecap="round" stroke-linejoin="round"/><path d="M7.100 8.400v5.400M10.900 8.400v5.400" stroke="#e8474a" stroke-width="1.700"/></svg>
<svg class="a" style="left:1322.5px;top:217.5px;" width="18" height="19" viewBox="0 0 18 19" fill="none"><path d="M8.300 3.100H5.200A4 4 0 0 0 1.200 7.100v6.900a4 4 0 0 0 4 4h6.200a4 4 0 0 0 4-4V8.500" stroke="#3a3a3a" stroke-width="1.5" stroke-linecap="round"/><path d="M13.800 .8v6.400M10.600 4h6.400" stroke="#3a3a3a" stroke-width="1.5" stroke-linecap="round"/><path d="M5.200 10.400h2.600M5.200 13.700h5.200" stroke="#3a3a3a" stroke-width="1.5" stroke-linecap="round"/></svg>
<svg class="a" style="left:1258.5px;top:253.5px;" width="18" height="18" viewBox="0 0 18 18" fill="none"><path d="M12.900 1.300 16 4.400 7.700 12.600l-3.700 .7.600-3.800z" stroke="#2c52ed" stroke-width="1.500" stroke-linejoin="round"/><path d="M3.600 9.600H3a2 2 0 0 0-2 2v2.400a2 2 0 0 0 2 2H14.800a2 2 0 0 0 2-2v-3.200" stroke="#2c52ed" stroke-width="1.500" stroke-linecap="round"/></svg>
<svg class="a" style="left:1290.9px;top:254px;" width="18" height="19.5" viewBox="0 0 18 19.5" fill="none"><path d="M.900 5.400H17.100M5.800 5.200c0-2.600 1.100-4.300 3.200-4.300s3.200 1.700 3.200 4.300" stroke="#e8474a" stroke-width="1.700" stroke-linecap="round"/><path d="M3 5.600l.600 10.300A3 3 0 0 0 6.600 18.700h4.800a3 3 0 0 0 3-2.800L15 5.600" stroke="#e8474a" stroke-width="1.700" stroke-linecap="round" stroke-linejoin="round"/><path d="M7.100 8.400v5.400M10.900 8.400v5.400" stroke="#e8474a" stroke-width="1.700"/></svg>
<svg class="a" style="left:1322.5px;top:253.5px;" width="18" height="19" viewBox="0 0 18 19" fill="none"><path d="M8.300 3.100H5.200A4 4 0 0 0 1.200 7.100v6.900a4 4 0 0 0 4 4h6.200a4 4 0 0 0 4-4V8.500" stroke="#3a3a3a" stroke-width="1.5" stroke-linecap="round"/><path d="M13.800 .8v6.400M10.600 4h6.400" stroke="#3a3a3a" stroke-width="1.5" stroke-linecap="round"/><path d="M5.200 10.400h2.600M5.200 13.700h5.200" stroke="#3a3a3a" stroke-width="1.5" stroke-linecap="round"/></svg>
<svg class="a" style="left:1258.5px;top:289.5px;" width="18" height="18" viewBox="0 0 18 18" fill="none"><path d="M12.900 1.300 16 4.400 7.700 12.600l-3.700 .7.600-3.800z" stroke="#2c52ed" stroke-width="1.500" stroke-linejoin="round"/><path d="M3.600 9.600H3a2 2 0 0 0-2 2v2.400a2 2 0 0 0 2 2H14.800a2 2 0 0 0 2-2v-3.200" stroke="#2c52ed" stroke-width="1.500" stroke-linecap="round"/></svg>
<svg class="a" style="left:1290.9px;top:290px;" width="18" height="19.5" viewBox="0 0 18 19.5" fill="none"><path d="M.900 5.400H17.100M5.800 5.200c0-2.600 1.100-4.300 3.200-4.300s3.200 1.700 3.200 4.300" stroke="#e8474a" stroke-width="1.700" stroke-linecap="round"/><path d="M3 5.600l.600 10.300A3 3 0 0 0 6.600 18.700h4.800a3 3 0 0 0 3-2.800L15 5.600" stroke="#e8474a" stroke-width="1.700" stroke-linecap="round" stroke-linejoin="round"/><path d="M7.100 8.400v5.400M10.900 8.400v5.400" stroke="#e8474a" stroke-width="1.700"/></svg>
<svg class="a" style="left:1322.5px;top:289.5px;" width="18" height="19" viewBox="0 0 18 19" fill="none"><path d="M8.300 3.100H5.200A4 4 0 0 0 1.200 7.100v6.900a4 4 0 0 0 4 4h6.200a4 4 0 0 0 4-4V8.500" stroke="#3a3a3a" stroke-width="1.5" stroke-linecap="round"/><path d="M13.800 .8v6.400M10.600 4h6.400" stroke="#3a3a3a" stroke-width="1.5" stroke-linecap="round"/><path d="M5.200 10.400h2.600M5.200 13.700h5.200" stroke="#3a3a3a" stroke-width="1.5" stroke-linecap="round"/></svg>
<svg class="a" style="left:1258.5px;top:325.5px;" width="18" height="18" viewBox="0 0 18 18" fill="none"><path d="M12.900 1.300 16 4.400 7.700 12.600l-3.700 .7.600-3.800z" stroke="#2c52ed" stroke-width="1.500" stroke-linejoin="round"/><path d="M3.600 9.600H3a2 2 0 0 0-2 2v2.400a2 2 0 0 0 2 2H14.800a2 2 0 0 0 2-2v-3.200" stroke="#2c52ed" stroke-width="1.500" stroke-linecap="round"/></svg>
<svg class="a" style="left:1290.9px;top:326px;" width="18" height="19.5" viewBox="0 0 18 19.5" fill="none"><path d="M.900 5.400H17.100M5.800 5.200c0-2.600 1.100-4.300 3.200-4.300s3.200 1.700 3.200 4.300" stroke="#e8474a" stroke-width="1.700" stroke-linecap="round"/><path d="M3 5.600l.600 10.300A3 3 0 0 0 6.600 18.700h4.800a3 3 0 0 0 3-2.800L15 5.600" stroke="#e8474a" stroke-width="1.700" stroke-linecap="round" stroke-linejoin="round"/><path d="M7.100 8.400v5.400M10.900 8.400v5.400" stroke="#e8474a" stroke-width="1.700"/></svg>
<svg class="a" style="left:1322.5px;top:325.5px;" width="18" height="19" viewBox="0 0 18 19" fill="none"><path d="M8.300 3.100H5.200A4 4 0 0 0 1.200 7.100v6.900a4 4 0 0 0 4 4h6.200a4 4 0 0 0 4-4V8.500" stroke="#3a3a3a" stroke-width="1.5" stroke-linecap="round"/><path d="M13.800 .8v6.400M10.600 4h6.400" stroke="#3a3a3a" stroke-width="1.5" stroke-linecap="round"/><path d="M5.200 10.400h2.600M5.200 13.700h5.200" stroke="#3a3a3a" stroke-width="1.5" stroke-linecap="round"/></svg>
<span class="t" style="left:247px;top:359.7px;font-size:13.5px;color:#1f2229;letter-spacing:0.11px;">Tổng số: <b>05</b> bản ghi</span>
<span class="t" style="left:1074.5px;top:359.7px;font-size:13.5px;color:#1f2229;letter-spacing:0.14px;">Số dòng/trang</span>
<span class="t" style="left:1171.5px;top:359.7px;font-size:13.5px;color:#1f2229;letter-spacing:0.23px;">20</span>
<svg class="a" style="left:1198.5px;top:366.4px;" width="11" height="7" viewBox="0 0 11 7" fill="none"><path d="M1.200 1.300 5.500 5.400 9.800 1.300" stroke="#414862" stroke-width="1.800" stroke-linecap="round" stroke-linejoin="round"/></svg>
<svg class="a" style="left:1232.5px;top:364.2px;" width="7" height="11" viewBox="0 0 7 11" fill="none"><path d="M5.600 1.200 1.500 5.500l4.100 4.300" stroke="#414862" stroke-width="1.800" stroke-linecap="round" stroke-linejoin="round"/></svg>
<span class="t" style="left:1253px;top:359.7px;font-size:13.5px;color:#3a3f4d;letter-spacing:-0.25px;">Trang</span>
<span class="t" style="left:1296px;top:359.7px;font-size:13.5px;color:#1f2229;">1</span>
<span class="t" style="left:1311.5px;top:359.7px;font-size:13.5px;color:#b8bdcc;">2</span>
<svg class="a" style="left:1330.5px;top:364.2px;" width="7" height="11" viewBox="0 0 7 11" fill="none"><path d="M1.400 1.200 5.500 5.500 1.400 9.800" stroke="#414862" stroke-width="1.800" stroke-linecap="round" stroke-linejoin="round"/></svg>
<div class="a" style="left:239px;top:478px;width:1110px;height:1px;background:#dcdcdc;"></div>
<div class="a" style="left:239px;top:480px;width:1110px;height:1px;background:#dcdcdc;"></div>
<span class="t" style="left:263.5px;top:496.1px;font-size:13.5px;color:#3f5ff0;letter-spacing:0.27px;">Thông tin chi tiết</span>
<div class="a" style="left:239px;top:520px;width:1110px;height:1px;background:#dddddd;"></div>
<div class="a" style="left:247px;top:520px;width:138px;height:1px;background:#3f5ff0;box-shadow:0 0 0 .25px #3f5ff0;"></div>
<div class="a" style="left:239px;top:527px;width:1112px;height:35px;background:#f5f5f5;"></div>
<div class="a" style="left:239px;top:597px;width:1112px;height:1px;background:#d3d7e2;"></div>
<div class="a" style="left:239px;top:633px;width:1112px;height:1px;background:#d3d7e2;"></div>
<div class="a" style="left:239px;top:669px;width:1112px;height:1px;background:#d3d7e2;"></div>
<div class="a" style="left:239px;top:705px;width:1112px;height:1px;background:#d3d7e2;"></div>
<div class="a" style="left:282px;top:527px;width:1px;height:179px;background:#d3d7e2;"></div>
<div class="a" style="left:457px;top:527px;width:1px;height:179px;background:#d3d7e2;"></div>
<div class="a" style="left:779px;top:527px;width:1px;height:179px;background:#d3d7e2;"></div>
<div class="a" style="left:910px;top:527px;width:1px;height:179px;background:#d3d7e2;"></div>
<div class="a" style="left:1014px;top:527px;width:1px;height:179px;background:#d3d7e2;"></div>
<div class="a" style="left:1121px;top:527px;width:1px;height:179px;background:#d3d7e2;"></div>
<div class="a" style="left:1236px;top:527px;width:1px;height:179px;background:#d3d7e2;"></div>
<span class="t" style="left:247px;top:535.8px;font-size:13px;color:#1f2229;font-weight:700;letter-spacing:0.08px;">STT</span>
<span class="t" style="left:291px;top:535.8px;font-size:13px;color:#1f2229;font-weight:700;letter-spacing:0.03px;">Nhóm tài sản</span>
<span class="t" style="left:466px;top:535.8px;font-size:13px;color:#1f2229;font-weight:700;letter-spacing:0.01px;">Tên tài sản</span>
<span class="t" style="left:788px;top:535.8px;font-size:13px;color:#1f2229;font-weight:700;letter-spacing:0.04px;">Mã tài sản</span>
<span class="t" style="left:938px;top:535.8px;font-size:13px;color:#1f2229;font-weight:700;letter-spacing:0.04px;">Thực nhập</span>
<span class="t" style="left:1048.5px;top:535.8px;font-size:13px;color:#1f2229;font-weight:700;letter-spacing:0.12px;">Thực xuất</span>
<span class="t" style="left:1179.5px;top:535.8px;font-size:13px;color:#1f2229;font-weight:700;letter-spacing:-0.08px;">Đơn giá</span>
<span class="t" style="left:1276px;top:535.8px;font-size:13px;color:#1f2229;font-weight:700;letter-spacing:0.13px;">Thành tiền</span>
<span class="t" style="left:256.5px;top:570.6px;font-size:13.5px;color:#1f2229;">1</span>
<span class="t" style="left:291px;top:570.6px;font-size:13.5px;color:#1f2229;letter-spacing:-0.06px;">Tài sản VT TBYT (Vật tư...</span>
<span class="t" style="left:466px;top:570.6px;font-size:13.5px;color:#1f2229;letter-spacing:0.08px;">Xe lấy máu, để dụng cụ XD-03</span>
<span class="t" style="left:788px;top:570.6px;font-size:13.5px;color:#1f2229;letter-spacing:0.27px;">CC.00000938</span>
<span class="t" style="left:998px;top:570.6px;font-size:13.5px;color:#1f2229;letter-spacing:0.28px;">5</span>
<span class="t" style="left:1166px;top:570.6px;font-size:13.5px;color:#1f2229;letter-spacing:0.22px;">2.820.000</span>
<span class="t" style="left:1274px;top:570.6px;font-size:13.5px;color:#1f2229;letter-spacing:0.11px;">14.099.999</span>
<span class="t" style="left:256.5px;top:606.6px;font-size:13.5px;color:#1f2229;">2</span>
<span class="t" style="left:291px;top:606.6px;font-size:13.5px;color:#1f2229;letter-spacing:-0.06px;">Tài sản VT TBYT (Vật tư...</span>
<span class="t" style="left:466px;top:606.6px;font-size:13.5px;color:#1f2229;letter-spacing:0.04px;">Xe chở đồ vải y tế XE-02</span>
<span class="t" style="left:788px;top:606.6px;font-size:13.5px;color:#1f2229;letter-spacing:0.27px;">CC.00000939</span>
<span class="t" style="left:998px;top:606.6px;font-size:13.5px;color:#1f2229;letter-spacing:0.28px;">5</span>
<span class="t" style="left:1166px;top:606.6px;font-size:13.5px;color:#1f2229;letter-spacing:0.22px;">3.650.000</span>
<span class="t" style="left:1274px;top:606.6px;font-size:13.5px;color:#1f2229;letter-spacing:0.11px;">18.249.998</span>
<span class="t" style="left:256.5px;top:642.6px;font-size:13.5px;color:#1f2229;">3</span>
<span class="t" style="left:291px;top:642.6px;font-size:13.5px;color:#1f2229;letter-spacing:-0.06px;">Tài sản VT TBYT (Vật tư...</span>
<span class="t" style="left:466px;top:642.6px;font-size:13.5px;color:#1f2229;letter-spacing:0.23px;">Cọc truyền CT-05</span>
<span class="t" style="left:788px;top:642.6px;font-size:13.5px;color:#1f2229;letter-spacing:0.27px;">CC.00000917</span>
<span class="t" style="left:990px;top:642.6px;font-size:13.5px;color:#1f2229;letter-spacing:0.28px;">70</span>
<span class="t" style="left:1177.5px;top:642.6px;font-size:13.5px;color:#1f2229;letter-spacing:0.24px;">800.000</span>
<span class="t" style="left:1274px;top:642.6px;font-size:13.5px;color:#1f2229;letter-spacing:0.11px;">56.000.018</span>
<span class="t" style="left:256.5px;top:678.6px;font-size:13.5px;color:#1f2229;">4</span>
<span class="t" style="left:291px;top:678.6px;font-size:13.5px;color:#1f2229;letter-spacing:-0.06px;">Tài sản VT TBYT (Vật tư...</span>
<span class="t" style="left:466px;top:678.6px;font-size:13.5px;color:#1f2229;letter-spacing:0.18px;">Tủ đựng thuốc TT-04</span>
<span class="t" style="left:788px;top:678.6px;font-size:13.5px;color:#1f2229;letter-spacing:0.27px;">CC.00000940</span>
<span class="t" style="left:998px;top:678.6px;font-size:13.5px;color:#1f2229;letter-spacing:0.28px;">5</span>
<span class="t" style="left:1166px;top:678.6px;font-size:13.5px;color:#1f2229;letter-spacing:0.22px;">5.800.001</span>
<span class="t" style="left:1274px;top:678.6px;font-size:13.5px;color:#1f2229;letter-spacing:0.11px;">29.000.003</span>
<span class="t" style="left:247px;top:712.7px;font-size:13.5px;color:#1f2229;letter-spacing:0.11px;">Tổng số: <b>03</b> bản ghi</span>
<span class="t" style="left:1074.5px;top:712.7px;font-size:13.5px;color:#1f2229;letter-spacing:0.14px;">Số dòng/trang</span>
<span class="t" style="left:1171.5px;top:712.7px;font-size:13.5px;color:#1f2229;letter-spacing:0.23px;">20</span>
<svg class="a" style="left:1198.5px;top:719.4px;" width="11" height="7" viewBox="0 0 11 7" fill="none"><path d="M1.200 1.300 5.500 5.400 9.800 1.300" stroke="#414862" stroke-width="1.800" stroke-linecap="round" stroke-linejoin="round"/></svg>
<svg class="a" style="left:1232.5px;top:717.2px;" width="7" height="11" viewBox="0 0 7 11" fill="none"><path d="M5.600 1.200 1.500 5.500l4.100 4.300" stroke="#414862" stroke-width="1.800" stroke-linecap="round" stroke-linejoin="round"/></svg>
<span class="t" style="left:1253px;top:712.7px;font-size:13.5px;color:#3a3f4d;letter-spacing:-0.25px;">Trang</span>
<span class="t" style="left:1296px;top:712.7px;font-size:13.5px;color:#1f2229;">1</span>
<span class="t" style="left:1311.5px;top:712.7px;font-size:13.5px;color:#b8bdcc;">2</span>
<svg class="a" style="left:1330.5px;top:717.2px;" width="7" height="11" viewBox="0 0 7 11" fill="none"><path d="M1.400 1.200 5.500 5.500 1.400 9.800" stroke="#414862" stroke-width="1.800" stroke-linecap="round" stroke-linejoin="round"/></svg>
<div class="a" style="left:1107px;top:96px;width:203px;height:56px;background:#fff;border-radius:4px;box-shadow:0 3px 8px rgba(25,30,60,.20),0 0 1px rgba(25,30,60,.10);"></div>
<svg class="a" style="left:1114px;top:104px;" width="16" height="16" viewBox="0 0 16 16" fill="none"><rect x=".8" y=".8" width="14.200" height="14.200" rx="3.800" stroke="#3a3a3a" stroke-width="1.500"/><path d="M7.900 4.700v6.400M4.700 7.900h6.400" stroke="#3a3a3a" stroke-width="1.400" stroke-linecap="round"/></svg>
<span class="t" style="left:1136.5px;top:103px;font-size:13.5px;color:#2a2d36;letter-spacing:0.05px;">Thêm phiếu nhập kho</span>
<svg class="a" style="left:1113.3px;top:127px;" width="18" height="19" viewBox="0 0 18 19" fill="none"><path d="M8.300 3.100H5.200A4 4 0 0 0 1.200 7.100v6.900a4 4 0 0 0 4 4h6.200a4 4 0 0 0 4-4V8.500" stroke="#3a3a3a" stroke-width="1.5" stroke-linecap="round"/><path d="M13.800 .8v6.400M10.600 4h6.400" stroke="#3a3a3a" stroke-width="1.5" stroke-linecap="round"/><path d="M5.200 10.400h2.600M5.200 13.700h5.200" stroke="#3a3a3a" stroke-width="1.5" stroke-linecap="round"/></svg>
<span class="t" style="left:1137px;top:127.5px;font-size:13.5px;color:#2a2d36;">Thêm từ hợp đồng</span>
<div class="a" style="left:1220px;top:379px;width:128px;height:22px;background:#1c1f29;border-radius:4px;"></div>
<svg class="a" style="left:1327.5px;top:374px;" width="8" height="6" viewBox="0 0 8 6" fill="none"><path d="M4 0 7.600 6H.4z" fill="#1c1f29"/></svg>
<span class="t" style="left:1225.5px;top:380.8px;font-size:12.5px;color:#fff;letter-spacing:0.02px;">Thêm phiếu cấp phát</span>
<div class="a" style="left:1273px;top:53px;width:40px;height:37px;border:4px solid #fa3e40;"></div>
<div class="a" style="left:1105px;top:122px;width:188px;height:32px;border:4px solid #fa3e40;"></div>
<div class="a" style="left:201px;top:171px;width:40px;height:40px;background:#fa3e40;border-radius:50%;"></div>
<span class="t" style="left:213px;top:182.2px;font-size:28px;color:#fff;font-family:NanumGothic,'Liberation Sans',sans-serif;font-size:29px;-webkit-text-stroke:.75px #fff;margin-left:-.5px;">1</span>
<div class="a" style="left:1301px;top:24px;width:40px;height:40px;background:#fa3e40;border-radius:50%;"></div>
<span class="t" style="left:1313px;top:35.4px;font-size:28px;color:#fff;-webkit-text-stroke:.3px #fff;">2</span>
<div class="a" style="left:1278px;top:135px;width:40px;height:40px;background:#fa3e40;border-radius:50%;"></div>
<span class="t" style="left:1290px;top:146.4px;font-size:28px;color:#fff;-webkit-text-stroke:.3px #fff;">3</span>
<svg class="a" style="left:1321.5px;top:350.5px;filter:drop-shadow(0 1px 1.500px rgba(0,0,0,.25));" width="19" height="22" viewBox="0 0 19 22" fill="none"><path d="M5.400 11.200V2.600a1.700 1.700 0 0 1 3.400 0v6.200l.1-1.500a1.500 1.500 0 0 1 3 .2v1.300l.1-.6a1.400 1.400 0 0 1 2.800.3v1.200l.1-.3a1.300 1.300 0 0 1 2.600.4c0 1.700.1 3.500-.2 5.100-.5 3.100-2.800 5.200-6 5.200-2.700 0-4.400-1.100-5.800-3.300L1 11.400c-.6-1-.3-1.900.4-2.300.8-.5 1.700-.2 2.300.6z" fill="#fff" stroke="#000" stroke-width="1.700" stroke-linejoin="round"/>
<path d="M8.800 8.800v3M11.900 8.800v3M14.800 9.700v2.300" stroke="#000" stroke-width="1.500" stroke-linecap="round"/></svg>
<span class="t" style="left:2px;top:0.2px;font-size:13.5px;color:#262626;letter-spacing:0.04px;">Thêm phiếu nhập kho</span>
<div class="a" style="left:0;top:0;width:1368px;height:770px;border:1px solid #000;pointer-events:none"></div>
</body></html>
